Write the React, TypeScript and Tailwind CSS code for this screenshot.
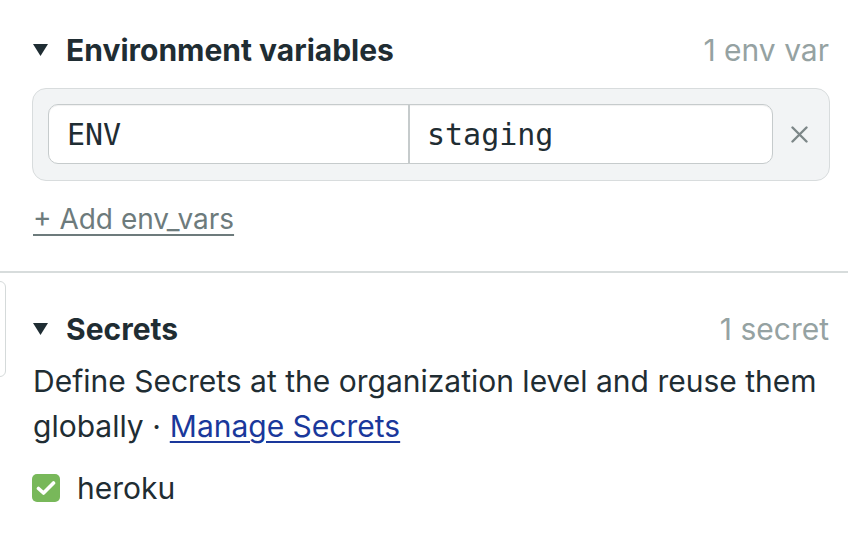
import React from 'react';

function Caret() {
  return (
    <svg width="15" height="12" viewBox="0 0 15 12" className="shrink-0">
      <path d="M0 0 H15 L7.5 12 Z" fill="#1f2d33" />
    </svg>
  );
}

function SectionHeader({ title, count }: { title: string; count: string }) {
  return (
    <div className="flex items-center justify-between h-[44px]">
      <div className="flex items-center gap-[18px] pl-px">
        <Caret />
        <h2 className="text-[30px] font-bold text-[#1f2d33] leading-none">{title}</h2>
      </div>
      <span className="text-[30px] text-[#95a2a2] leading-none">{count}</span>
    </div>
  );
}

export default function App() {
  return (
    <div
      className="relative w-[848px] h-[534px] overflow-hidden bg-white"
      style={{ fontFamily: 'Inter, "Noto Sans", sans-serif' }}
    >
      {/* edge of a neighbouring panel */}
      <div className="absolute -left-[20px] top-[281px] w-[26px] h-[96px] rounded-[6px] border border-[#d5dada]" />

      <div className="px-[32px] pt-[28px] pr-[19px]">
        <SectionHeader title="Environment variables" count="1 env var" />

        <div className="mt-[16px] flex items-center rounded-[14px] border border-[#d8dcdd] bg-[#f2f4f5] p-[15px] pb-[16px] w-[798px]">
          <div
            className="flex h-[60px] w-[725px] rounded-[10px] border border-[#c6cbcc] bg-white shadow-[inset_0_1px_1px_rgba(0,0,0,0.06)] text-[30px] text-[#1f2d33]"
            style={{ fontFamily: '"DejaVu Sans Mono", "Liberation Mono", monospace' }}
          >
            <div className="flex w-[361px] items-center border-r-2 border-[#c6cbcc] pl-[18px]">ENV</div>
            <div className="flex flex-1 items-center pl-[17px]">staging</div>
          </div>
          <button className="ml-[16px] flex h-[20px] w-[20px] items-center justify-center">
            <svg width="17" height="17" viewBox="0 0 17 17">
              <path d="M1.5 1.5 L15.5 15.5 M15.5 1.5 L1.5 15.5" stroke="#7d8788" strokeWidth="2.4" strokeLinecap="round" />
            </svg>
          </button>
        </div>

        <div className="mt-[18px] h-[40px] flex items-center">
          <a className="text-[28px] text-[#6d7b7c] underline decoration-2 underline-offset-[5px] leading-none pl-px">
            + Add env_vars
          </a>
        </div>
      </div>

      <div className="mt-[32px] border-t-2 border-[#d7dcdc]" />

      <div className="px-[32px] pr-[19px] pt-[34px]">
        <SectionHeader title="Secrets" count="1 secret" />

        <div className="mt-[8px] text-[30px] leading-[45px] text-[#1f2d33] pl-px">
          <div>Define Secrets at the organization level and reuse them</div>
          <div className="flex gap-[9px]">
            <span>globally ·</span>
            <a className="text-[#1a389b] underline decoration-2 underline-offset-[4px]">Manage Secrets</a>
          </div>
        </div>

        <div className="mt-[19px] flex h-[40px] items-center gap-[17px]">
          <span className="flex h-[28px] w-[28px] items-center justify-center rounded-[5px] bg-[#78b85a]">
            <svg width="20" height="16" viewBox="0 0 20 16">
              <path d="M2.5 8.5 L7.5 13 L17.5 3" fill="none" stroke="white" strokeWidth="3.6" strokeLinecap="round" strokeLinejoin="round" />
            </svg>
          </span>
          <span className="text-[30px] text-[#1f2d33]">heroku</span>
        </div>
      </div>
    </div>
  );
}
